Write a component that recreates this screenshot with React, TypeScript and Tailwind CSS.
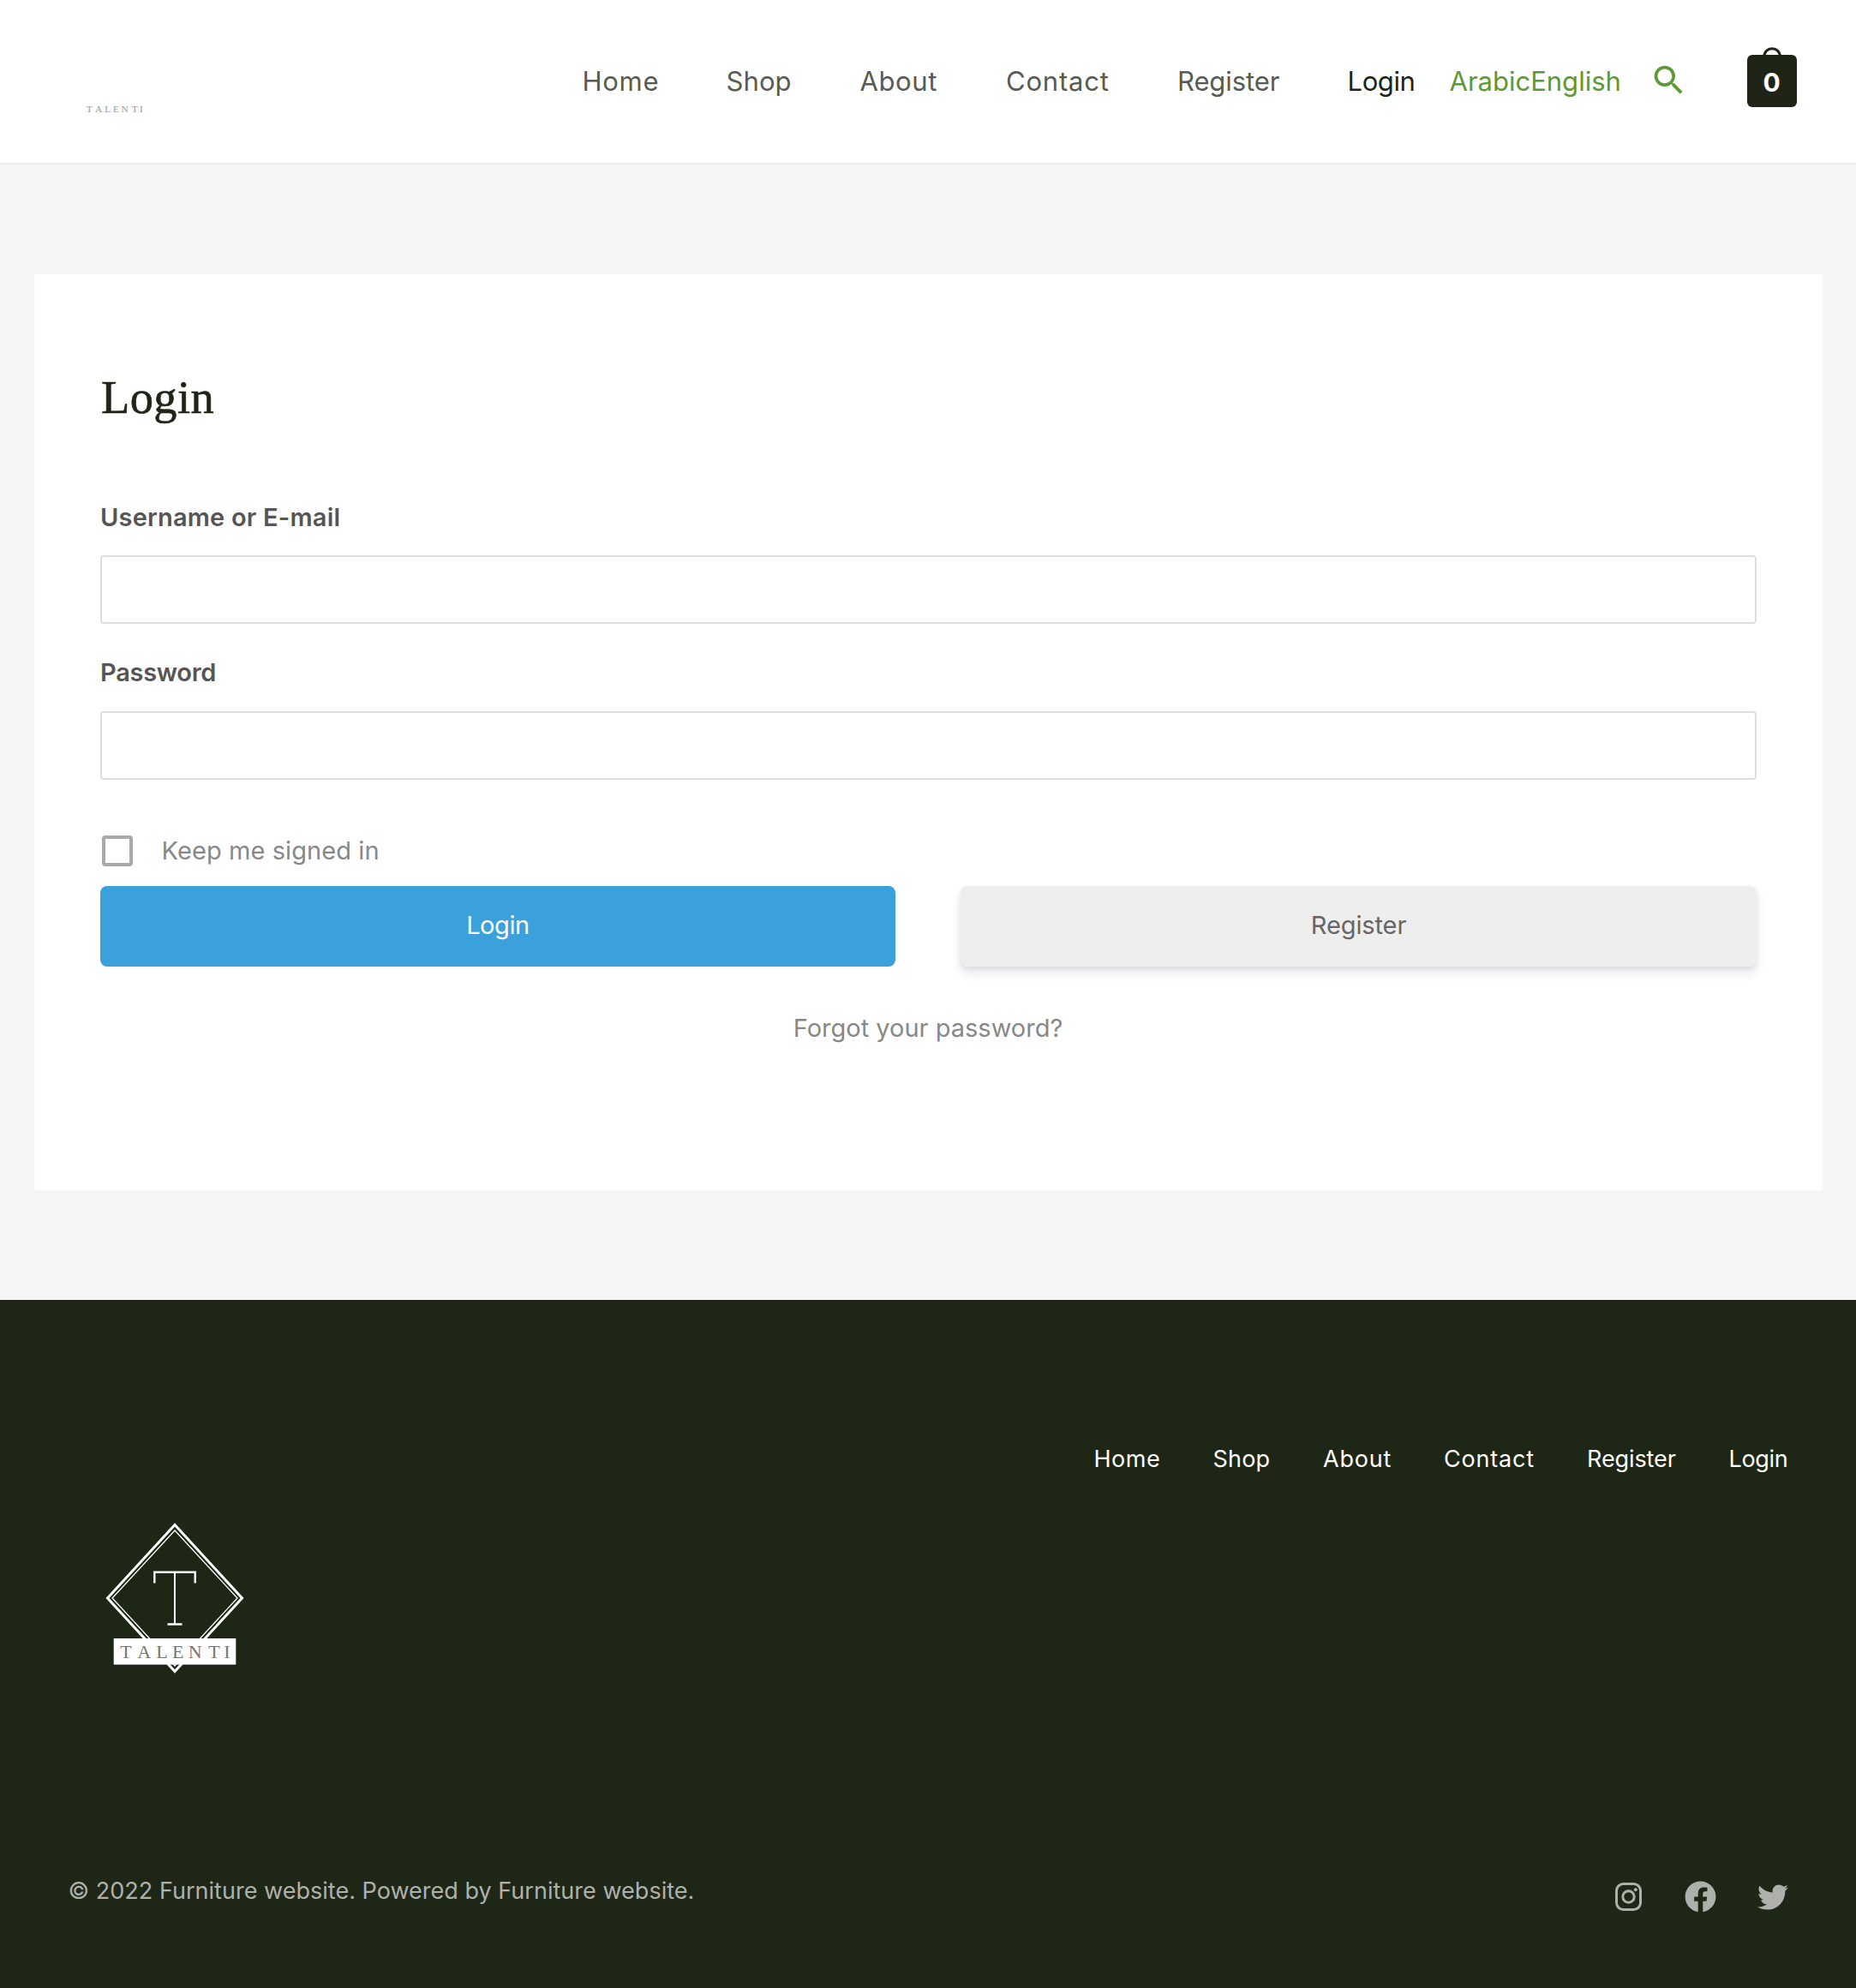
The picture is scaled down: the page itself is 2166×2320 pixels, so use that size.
import type { ReactNode } from "react";
import { MdSearch } from "react-icons/md";
import { FaFacebook, FaTwitter } from "react-icons/fa";

const headerLinks = [
  { label: "Home", cls: "w-[168px] tracking-[0.7px] text-[#575b52]" },
  { label: "Shop", cls: "w-[156px] tracking-[0.1px] text-[#575b52]" },
  { label: "About", cls: "w-[170.5px] tracking-[0.6px] text-[#575b52]" },
  { label: "Contact", cls: "w-[200px] tracking-[0.8px] text-[#575b52]" },
  { label: "Register", cls: "w-[198.5px] tracking-[-0.1px] text-[#575b52]" },
  { label: "Login", cls: "w-[119px] tracking-[-0.4px] text-[#1e2516]" },
];

const footerLinks = [
  { label: "Home", cls: "w-[139px] tracking-[0.5px]" },
  { label: "Shop", cls: "w-[128.5px] tracking-[0.2px]" },
  { label: "About", cls: "w-[141px] tracking-[0.8px]" },
  { label: "Contact", cls: "w-[167px] tracking-[0.8px]" },
  { label: "Register", cls: "w-[165.5px] tracking-[-0.1px]" },
  { label: "Login", cls: "tracking-[-0.3px]" },
];

function Wordmark({ fill }: { fill: string }) {
  return (
    <text
      x="43 64.2 85 103.7 123.7 146 161"
      y="159"
      textAnchor="middle"
      fontFamily="Liberation Serif, serif"
      fontSize="22"
      fill={fill}
    >
      TALENTI
    </text>
  );
}

function FooterLogo() {
  return (
    <svg className="h-[200px] w-[200px]" viewBox="0 0 200 200" aria-label="Talenti">
      <path d="M100 3.5 178.5 89 100 174.5 21.5 89Z" fill="none" stroke="#fff" strokeWidth="3" />
      <path d="M100 10 173 89 100 168 27 89Z" fill="none" stroke="#fff" strokeWidth="1.3" />
      <text x="100" y="119.5" textAnchor="middle" fontFamily="Inter, sans-serif" fontWeight="100" fontSize="85" fill="#fff">
        T
      </text>
      <path d="M76.3 71.5V58.6H123.7V71.5M91.5 119.5H108.5" fill="none" stroke="#fff" strokeWidth="2.4" />
      <rect x="28.7" y="136" width="142.6" height="30.6" fill="#fff" />
      <Wordmark fill="#74776f" />
    </svg>
  );
}

function Field({ label, children }: { label: string; children?: ReactNode }) {
  return (
    <label className="block">
      <span className="block h-9 text-[29px] leading-9 font-semibold text-[#555555]">{children ?? label}</span>
      <input
        aria-label={label}
        className="mt-[27px] block h-20 w-[1933px] rounded-[4px] border-2 border-[#dddddd] bg-white outline-none"
      />
    </label>
  );
}

export default function App() {
  return (
    <div className="flex h-[2320px] w-[2166px] flex-col bg-[#f4f6f4] font-['Inter',sans-serif]">
      <header className="flex h-[192px] shrink-0 items-center border-b-2 border-[#ebedeb] bg-white">
        <div className="w-[679.5px] pl-[81.5px]">
          <svg className="mt-[24px] h-[103px] w-[103px]" viewBox="0 -56 200 200" aria-label="Talenti">
            <g transform="translate(0 -70)">
              <Wordmark fill="#999999" />
            </g>
          </svg>
        </div>
        <nav className="flex text-[31px] leading-10">
          {headerLinks.map((l) => (
            <a key={l.label} className={l.cls}>
              {l.label}
            </a>
          ))}
        </nav>
        <a className="w-[233px] text-[31px] leading-10 text-[#5b9a35]">ArabicEnglish</a>
        <MdSearch className="mt-[-4px] h-[45px] w-[45px] text-[#5b9a35]" />
        <div className="relative mt-[-10px] ml-[69px] h-[70px] w-[58px]">
          <svg className="h-[70px] w-[58px]" viewBox="0 0 58 70">
            <path d="M19.8 11a9.3 9.3 0 0 1 18.6 0" fill="none" stroke="#1e2516" strokeWidth="3" />
            <rect y="9" width="58" height="61" rx="6" fill="#1e2516" />
          </svg>
          <span className="absolute inset-x-0 top-[21px] text-center text-[30px] leading-10 font-bold text-white">0</span>
        </div>
      </header>

      <main className="mt-32 ml-10 h-[1069px] w-[2087px] shrink-0 bg-white pt-28 pl-[77px]">
        <h1 className="h-16 pl-px font-['Liberation_Serif',serif] text-[54.5px] leading-[64px] tracking-[0.4px] text-[#1e2516] [-webkit-text-stroke:0.6px_#1e2516]">
          Login
        </h1>
        <form className="mt-[89px]">
          <Field label="Username or E-mail">
            <span className="relative top-px tracking-[0.2px]">Username or E-mail</span>
          </Field>
          <div className="mt-[39px]">
            <Field label="Password">
              <span className="tracking-[-0.3px]">Password</span>
            </Field>
          </div>
          <div className="mt-[65px] flex h-9 items-center">
            <span className="ml-0.5 h-9 w-9 rounded-[4px] border-4 border-[#aaaaaa]" />
            <span className="ml-[33.5px] text-[29px] leading-9 tracking-[0.08px] text-[#888888]">Keep me signed in</span>
          </div>
          <div className="mt-[23px] flex gap-[76px] text-[29px]">
            <button className="h-[94px] w-[928px] rounded-[8px] bg-[#3ba1da] pb-[3px] tracking-[-0.4px] text-white">Login</button>
            <button className="h-[94px] w-[929px] rounded-[8px] bg-[#eeeeee] pb-[3px] tracking-[-0.1px] text-[#666666] shadow-[0_8px_12px_rgba(50,50,93,0.11),0_2px_6px_rgba(0,0,0,0.08)]">
              Register
            </button>
          </div>
          <a className="mt-[54px] block h-9 w-[1932px] text-center text-[29px] leading-9 text-[#888888]">
            Forgot your password?
          </a>
        </form>
      </main>

      <footer className="mt-[128px] flex flex-1 flex-col bg-[#1e2616] text-[27px] leading-9">
        <nav className="mt-[168px] ml-[1276.5px] flex text-white">
          {footerLinks.map((l) => (
            <a key={l.label} className={l.cls}>
              {l.label}
            </a>
          ))}
        </nav>
        <div className="mt-[55px] ml-[104px]">
          <FooterLogo />
        </div>
        <div className="mt-[204px] flex items-center pl-[79.5px] text-[#aeb1ab]">
          <p className="w-[1805.5px] pt-px tracking-[0.02px]">© 2022 Furniture website. Powered by Furniture website.</p>
          <svg className="mt-[15px] h-[33px] w-[31px]" viewBox="0 0 31 33" fill="none" stroke="currentColor">
            <rect x="1.5" y="1.5" width="28" height="30" rx="8" strokeWidth="3" />
            <circle cx="15.5" cy="16.5" r="6.7" strokeWidth="3" />
            <circle cx="23.8" cy="8.2" r="2" fill="currentColor" stroke="none" />
          </svg>
          <FaFacebook className="mt-[15px] ml-[50px] h-[37px] w-[37px]" />
          <FaTwitter className="mt-[15px] ml-[48px] h-[36px] w-[36px]" />
        </div>
      </footer>
    </div>
  );
}
